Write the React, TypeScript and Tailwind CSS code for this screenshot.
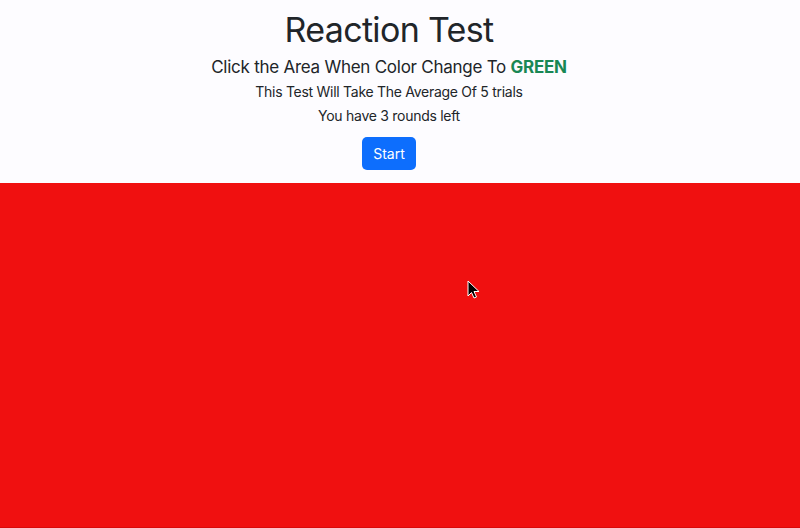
export default function App() {
  return (
    <div className="flex h-[528px] w-[800px] flex-col bg-[#fdfcff] font-['Inter',sans-serif] text-[#212529]">
      {/* Header */}
      <div className="flex h-[183px] shrink-0 flex-col items-center pr-[22px]">
        <h1 className="mt-[8px] text-[34px] leading-[44px] tracking-[-0.02em]">Reaction Test</h1>
        <h5 className="mt-[3px] text-[17px] leading-[24px] font-normal tracking-[-0.015em]">
          Click the Area When Color Change To{" "}
          <span className="font-bold text-[#198754]">GREEN</span>
        </h5>
        <p className="mt-[2px] text-[14px] leading-[22px] tracking-[-0.02em]">
          This Test Will Take The Average Of 5 trials
        </p>
        <p className="mt-[2px] text-[14px] leading-[22px] tracking-[-0.02em]">You have 3 rounds left</p>
        <button className="mt-[10px] h-[33px] rounded-[5px] bg-[#0d6efd] px-[11px] text-[14px] text-white">
          Start
        </button>
      </div>

      {/* Test area */}
      <div className="relative flex-1 border-b border-[#d80a0a] bg-[#f01010]">
        <svg
          className="absolute left-[467px] top-[97px]"
          width="14"
          height="20"
          viewBox="0 0 14 20"
        >
          <path d="M1 1 L1 16 L4.5 12.5 L7 18 L9.5 17 L7 11.5 L12 11.5 Z" fill="#000" stroke="#fff" strokeWidth="1" />
        </svg>
      </div>
    </div>
  );
}
